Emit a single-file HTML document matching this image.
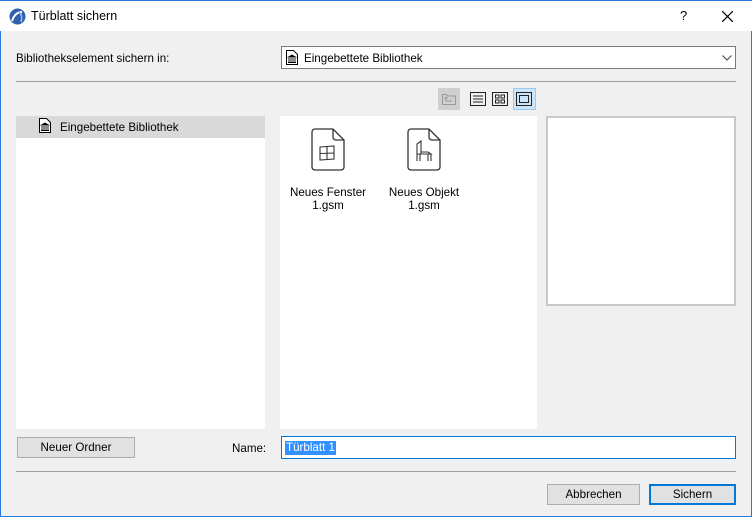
<!DOCTYPE html>
<html><head><style>
*{box-sizing:border-box;margin:0;padding:0}
body{width:752px;height:517px;background:#f0f0f0;font-family:"Liberation Sans",sans-serif;font-size:11.6px;color:#000;position:relative;overflow:hidden}
.win{position:absolute;left:0;top:0;width:752px;height:517px;border:1px solid #2b79d6;border-top:none}
.title{position:absolute;left:0;top:0;width:752px;height:31px;background:#fff;border-top:1px solid #2b79d6}
.a{position:absolute}
.btn{position:absolute;background:#e1e1e1;border:1px solid #adadad;text-align:center;line-height:19px;font-size:11.6px}
</style></head><body>
<div class="win"></div>
<div class="title">
<svg class="a" style="left:9px;top:7px" width="17" height="17" viewBox="0 0 17 17"><circle cx="8.5" cy="8.5" r="8" fill="#2f5fae"/><path d="M3 13 Q6 4 13 4" stroke="#fff" stroke-width="2" fill="none"/><path d="M10 4 Q14 7 12 14" stroke="#9fc1ef" stroke-width="1.5" fill="none"/></svg>
<div class="a" style="left:31px;top:8px;font-size:12.5px">Türblatt sichern</div>
<div class="a" style="left:680px;top:7px;font-size:13px">?</div>
<svg class="a" style="left:722px;top:10px" width="11" height="11"><path d="M0 0L11 11M11 0L0 11" stroke="#000" stroke-width="1.2"/></svg>
</div>
<div class="a" style="left:16px;top:52px">Bibliothekselement sichern in:</div>
<div class="a" style="left:281px;top:46px;width:455px;height:23px;background:#fff;border:1px solid #7a7a7a">
<svg class="a" style="left:4px;top:3px" width="12" height="15" viewBox="0 0 12 15"><path d="M0.5 0.5h7l4 4v10h-11z" fill="#fff" stroke="#000"/><path d="M2.5 7l3.5-2 3.5 2zM3 8v4M5 8v4M7 8v4M9 8v4M2 12.5h8" stroke="#000" fill="#000" stroke-width="0.9"/></svg>
<div class="a" style="left:22px;top:5px">Eingebettete Bibliothek</div>
<svg class="a" style="left:440px;top:8px" width="10" height="6"><path d="M0.5 0.5l4.5 4.5 4.5-4.5" stroke="#444" fill="none"/></svg>
</div>
<div class="a" style="left:16px;top:81px;width:720px;height:1px;background:#a0a0a0"></div>
<div class="a" style="left:438px;top:88px;width:22px;height:22px;background:#cfcfcf"></div>
<svg class="a" style="left:442px;top:93px" width="14" height="12"><path d="M0.5 1.5h4l1 1.5h8v8.5h-13z" fill="none" stroke="#999"/><path d="M4 4v4h6M4 4l-1.5 1.5M4 4l1.5 1.5" stroke="#999" fill="none"/></svg>
<svg class="a" style="left:470px;top:92px" width="16" height="14"><rect x="0.5" y="0.5" width="15" height="13" fill="none" stroke="#222"/><path d="M3 4h10M3 7h10M3 10h10" stroke="#222"/></svg>
<svg class="a" style="left:492px;top:92px" width="16" height="14"><rect x="0.5" y="0.5" width="15" height="13" fill="none" stroke="#222"/><rect x="3.5" y="3" width="3.5" height="3" fill="none" stroke="#222"/><rect x="9" y="3" width="3.5" height="3" fill="none" stroke="#222"/><rect x="3.5" y="8" width="3.5" height="3" fill="none" stroke="#222"/><rect x="9" y="8" width="3.5" height="3" fill="none" stroke="#222"/></svg>
<div class="a" style="left:513px;top:88px;width:23px;height:22px;background:#cce4f7;border:1px solid #99c9ef"></div>
<svg class="a" style="left:516px;top:92px" width="16" height="14"><rect x="0.5" y="0.5" width="15" height="13" fill="none" stroke="#222"/><rect x="3.5" y="3.5" width="9" height="7" fill="none" stroke="#222"/></svg>
<div class="a" style="left:16px;top:116px;width:249px;height:313px;background:#fff"></div>
<div class="a" style="left:16px;top:116px;width:249px;height:22px;background:#d9d9d9"></div>
<svg class="a" style="left:39px;top:118px" width="12" height="15" viewBox="0 0 12 15"><path d="M0.5 0.5h7l4 4v10h-11z" fill="#fff" stroke="#000"/><path d="M2.5 7l3.5-2 3.5 2zM3 8v4M5 8v4M7 8v4M9 8v4M2 12.5h8" stroke="#000" fill="#000" stroke-width="0.9"/></svg>
<div class="a" style="left:60px;top:121px">Eingebettete Bibliothek</div>
<div class="a" style="left:280px;top:116px;width:257px;height:313px;background:#fff"></div>
<svg class="a" style="left:311px;top:128px" width="34" height="44" viewBox="0 0 34 44"><path d="M4 1h18l11 11v27a3 3 0 0 1-3 3H4a3 3 0 0 1-3-3V4a3 3 0 0 1 3-3z" fill="#fff" stroke="#333" stroke-width="1.3"/><path d="M22 1v8a3 3 0 0 0 3 3h8" fill="none" stroke="#333" stroke-width="1.3"/><path d="M9 19l14-1v13l-14 1zM16 18.5v13M9 25.5l14-0.5" fill="none" stroke="#333" stroke-width="1.1"/></svg>
<div class="a" style="left:283px;top:186px;width:90px;text-align:center;line-height:13px">Neues Fenster<br>1.gsm</div>
<svg class="a" style="left:407px;top:128px" width="34" height="44" viewBox="0 0 34 44"><path d="M4 1h18l11 11v27a3 3 0 0 1-3 3H4a3 3 0 0 1-3-3V4a3 3 0 0 1 3-3z" fill="#fff" stroke="#333" stroke-width="1.3"/><path d="M22 1v8a3 3 0 0 0 3 3h8" fill="none" stroke="#333" stroke-width="1.3"/><path d="M10 33V16l4-3v13M10 26h14l-3-2h-7M13 26v7M21 26v7M24 26v7" fill="none" stroke="#333" stroke-width="1.1"/></svg>
<div class="a" style="left:379px;top:186px;width:90px;text-align:center;line-height:13px">Neues Objekt<br>1.gsm</div>
<div class="a" style="left:546px;top:116px;width:190px;height:190px;background:#fff;border:2px solid #c8c8c8"></div>
<div class="btn" style="left:17px;top:437px;width:118px;height:21px">Neuer Ordner</div>
<div class="a" style="left:232px;top:442px">Name:</div>
<div class="a" style="left:281px;top:436px;width:455px;height:23px;background:#fff;border:1px solid #0078d7">
<span class="a" style="left:3px;top:4px;background:#3390ff;color:#fff;padding:0 1px;line-height:14px">Türblatt 1</span></div>
<div class="a" style="left:16px;top:471px;width:720px;height:1px;background:#a0a0a0"></div>
<div class="btn" style="left:547px;top:484px;width:93px;height:21px">Abbrechen</div>
<div class="btn" style="left:649px;top:484px;width:87px;height:21px;border:2px solid #0078d7;line-height:17px">Sichern</div>
</body></html>
